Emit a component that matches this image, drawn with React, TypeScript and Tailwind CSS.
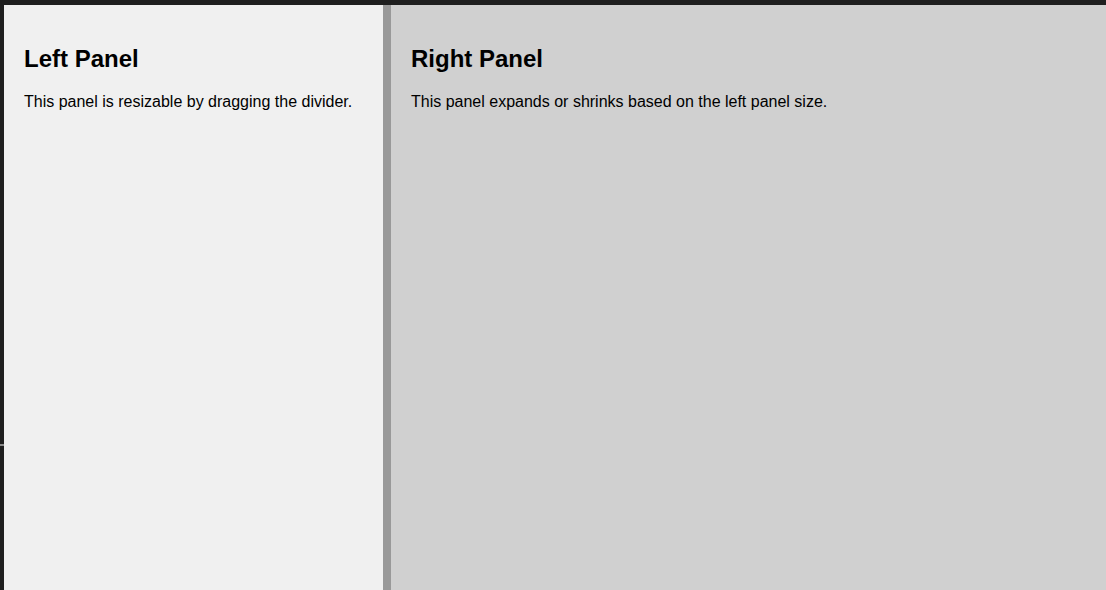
export default function App() {
  return (
    <div className="h-screen flex flex-col bg-[#1f1f1f] font-['Liberation_Sans',Arial,sans-serif] text-black overflow-hidden">
      {/* Top strip */}
      <div className="h-[5px] shrink-0" />

      <div className="flex flex-1 min-h-0">
        {/* Left edge strip with drag marker */}
        <div className="w-[4px] shrink-0 flex flex-col">
          <div className="h-[439px]" />
          <div className="h-[2px] bg-[#8a8a8a]" />
        </div>

        {/* Left Panel */}
        <div className="w-[379px] shrink-0 bg-[#f0f0f0] p-[20px]">
          <h2 className="text-[24px] font-bold leading-[normal] mt-[20px] mb-[20px]">Left Panel</h2>
          <p className="text-base leading-[normal]">This panel is resizable by dragging the divider.</p>
        </div>

        {/* Divider */}
        <div className="w-[8px] shrink-0 bg-[#999999] cursor-col-resize" />

        {/* Right Panel */}
        <div className="flex-1 bg-[#d0d0d0] p-[20px]">
          <h2 className="text-[24px] font-bold leading-[normal] mt-[20px] mb-[20px]">Right Panel</h2>
          <p className="text-base leading-[normal]">This panel expands or shrinks based on the left panel size.</p>
        </div>
      </div>
    </div>
  );
}
